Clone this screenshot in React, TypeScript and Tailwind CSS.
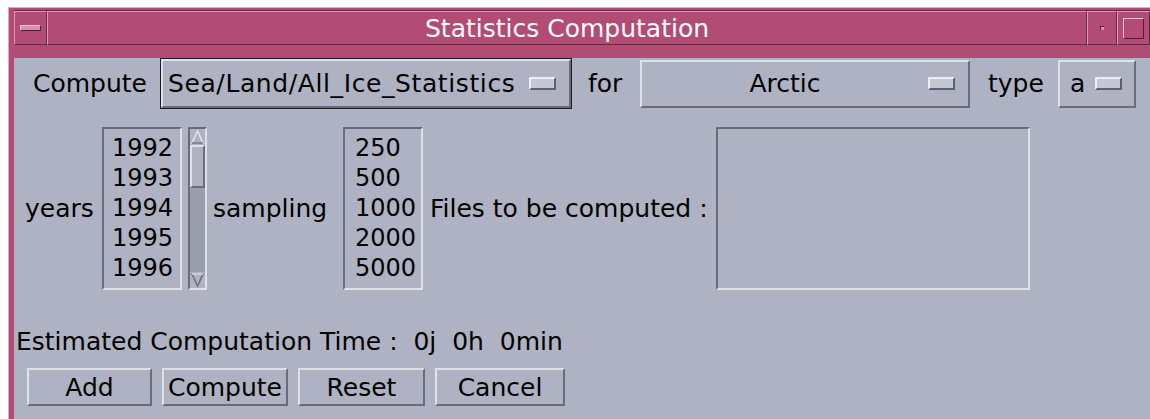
import React from "react";

// Motif-style bevel edges
const raised =
  "border-2 border-t-[#dfe1e9] border-l-[#dfe1e9] border-b-[#6a6c7a] border-r-[#6a6c7a]";
const sunken =
  "border-2 border-t-[#6a6c7a] border-l-[#6a6c7a] border-b-[#dfe1e9] border-r-[#dfe1e9]";
const titleBevel =
  "border border-t-[#e09ab8] border-l-[#e09ab8] border-b-[#6f2444] border-r-[#6f2444]";

const Indicator: React.FC = () => (
  <span className="inline-block shrink-0 w-[27px] h-[13px] border-2 border-t-[#eceef4] border-l-[#eceef4] border-b-[#5f6170] border-r-[#5f6170] bg-[#c4c7d4]" />
);

const years = ["1992", "1993", "1994", "1995", "1996"];
const samplings = ["250", "500", "1000", "2000", "5000"];

const ScrollBar: React.FC = () => (
  <div className={`ml-[6px] w-[19px] h-[163px] flex flex-col bg-[#9a9dae] ${sunken}`}>
    <svg width="15" height="16" viewBox="0 0 15 16" className="shrink-0 bg-[#afb2c3]">
      <polygon points="7.5,2 13,14 2,14" fill="#afb2c3" stroke="#e4e6ee" strokeWidth="1.5" />
      <line x1="13" y1="14" x2="2" y2="14" stroke="#6a6c7a" strokeWidth="1.5" />
    </svg>
    <div className={`h-[43px] bg-[#afb2c3] ${raised}`} />
    <div className="flex-1" />
    <svg width="15" height="16" viewBox="0 0 15 16" className="shrink-0 bg-[#afb2c3]">
      <polygon points="2,2 13,2 7.5,14" fill="#afb2c3" stroke="#6a6c7a" strokeWidth="1.5" />
      <line x1="2" y1="2" x2="13" y2="2" stroke="#e4e6ee" strokeWidth="1.5" />
    </svg>
  </div>
);

const PushButton: React.FC<{ label: string; width: string; first?: boolean }> = ({
  label,
  width,
  first,
}) => (
  <button
    className={`${first ? "ml-[13px]" : "ml-[10px]"} ${width} h-[38px] flex items-center justify-center bg-[#afb2c3] ${raised} text-[25px] leading-none text-black whitespace-nowrap`}
  >
    {label}
  </button>
);

export default function App() {
  return (
    <div className="w-[1150px] h-[419px] overflow-hidden bg-white font-['DejaVu_Sans',sans-serif] text-black">
      <div className="ml-[8px] mt-[7px] w-[1160px] bg-[#b24c74] border-l border-t border-[#e3a6c0] pl-[5px] pt-[2px]">
        {/* title bar */}
        <div className="flex h-[35px] border-t border-[#6f2444]">
          <div className={`w-[33px] flex items-center justify-center ${titleBevel}`}>
            <span className="w-[21px] h-[6px] bg-[#d990b0] border border-t-[#f0c4d6] border-l-[#f0c4d6] border-b-[#5c1a36] border-r-[#5c1a36]" />
          </div>
          <div
            className={`w-[1040px] flex items-center justify-center text-white text-[25px] leading-none ${titleBevel}`}
          >
            Statistics Computation
          </div>
          <div className={`w-[30px] flex items-center justify-center ${titleBevel}`}>
            <span className="w-[4px] h-[4px] bg-[#d990b0] border-t border-l border-[#5c1a36]" />
          </div>
          <div className={`w-[33px] flex items-center pl-[5px] ${titleBevel}`}>
            <span className="w-[21px] h-[21px] border border-t-[#f0c4d6] border-l-[#f0c4d6] border-b-[#5c1a36] border-r-[#5c1a36]" />
          </div>
        </div>

        {/* dialog body */}
        <div className="h-[371px] bg-[#afb2c3] text-[25px] leading-none">
          {/* compute / for / type row */}
          <div className="flex items-center h-[51px] mt-[13px]">
            <span className="ml-[19px] w-[109px] whitespace-nowrap">Compute</span>
            <div className="ml-[18px] w-[412px] h-[51px] border border-[#1c1c22]">
              <div className={`h-full flex items-center pl-[5px] pr-[13px] ${raised}`}>
                <span className="flex-1 whitespace-nowrap tracking-[0.6px]">
                  Sea/Land/All_Ice_Statistics
                </span>
                <Indicator />
              </div>
            </div>
            <span className="ml-[16px] w-[37px]">for</span>
            <div className={`ml-[15px] w-[330px] h-[48px] flex items-center pr-[13px] ${raised}`}>
              <span className="flex-1 text-center">Arctic</span>
              <Indicator />
            </div>
            <span className="ml-[18px] w-[54px]">type</span>
            <div className={`ml-[16px] w-[78px] h-[48px] flex items-center pl-[10px] pr-[12px] ${raised}`}>
              <span className="flex-1">a</span>
              <Indicator />
            </div>
          </div>

          {/* lists row */}
          <div className="flex items-center mt-[18px] h-[163px]">
            <span className="ml-[11px] w-[63px]">years</span>
            <div className={`ml-[14px] w-[80px] h-[163px] pl-[8px] pt-[4px] text-[24px] ${sunken}`}>
              {years.map((y) => (
                <div key={y} className="leading-[30px]">
                  {y}
                </div>
              ))}
            </div>
            <ScrollBar />
            <span className="ml-[6px] w-[115px]">sampling</span>
            <div className={`ml-[15px] w-[80px] h-[163px] pl-[10px] pt-[4px] text-[24px] ${sunken}`}>
              {samplings.map((s) => (
                <div key={s} className="leading-[30px]">
                  {s}
                </div>
              ))}
            </div>
            <span className="ml-[7px] w-[275px] whitespace-nowrap">Files to be computed :</span>
            <div className={`ml-[11px] w-[314px] h-[163px] ${sunken}`} />
          </div>

          {/* time estimate */}
          <div className="mt-[37px] ml-[2px] h-[28px] flex items-center whitespace-pre">
            Estimated Computation Time :  0j  0h  0min
          </div>

          {/* action buttons */}
          <div className="flex mt-[13px]">
            <PushButton label="Add" width="w-[125px]" first />
            <PushButton label="Compute" width="w-[126px]" />
            <PushButton label="Reset" width="w-[127px]" />
            <PushButton label="Cancel" width="w-[130px]" />
          </div>
        </div>
        <div className="h-[4px]" />
      </div>
    </div>
  );
}
